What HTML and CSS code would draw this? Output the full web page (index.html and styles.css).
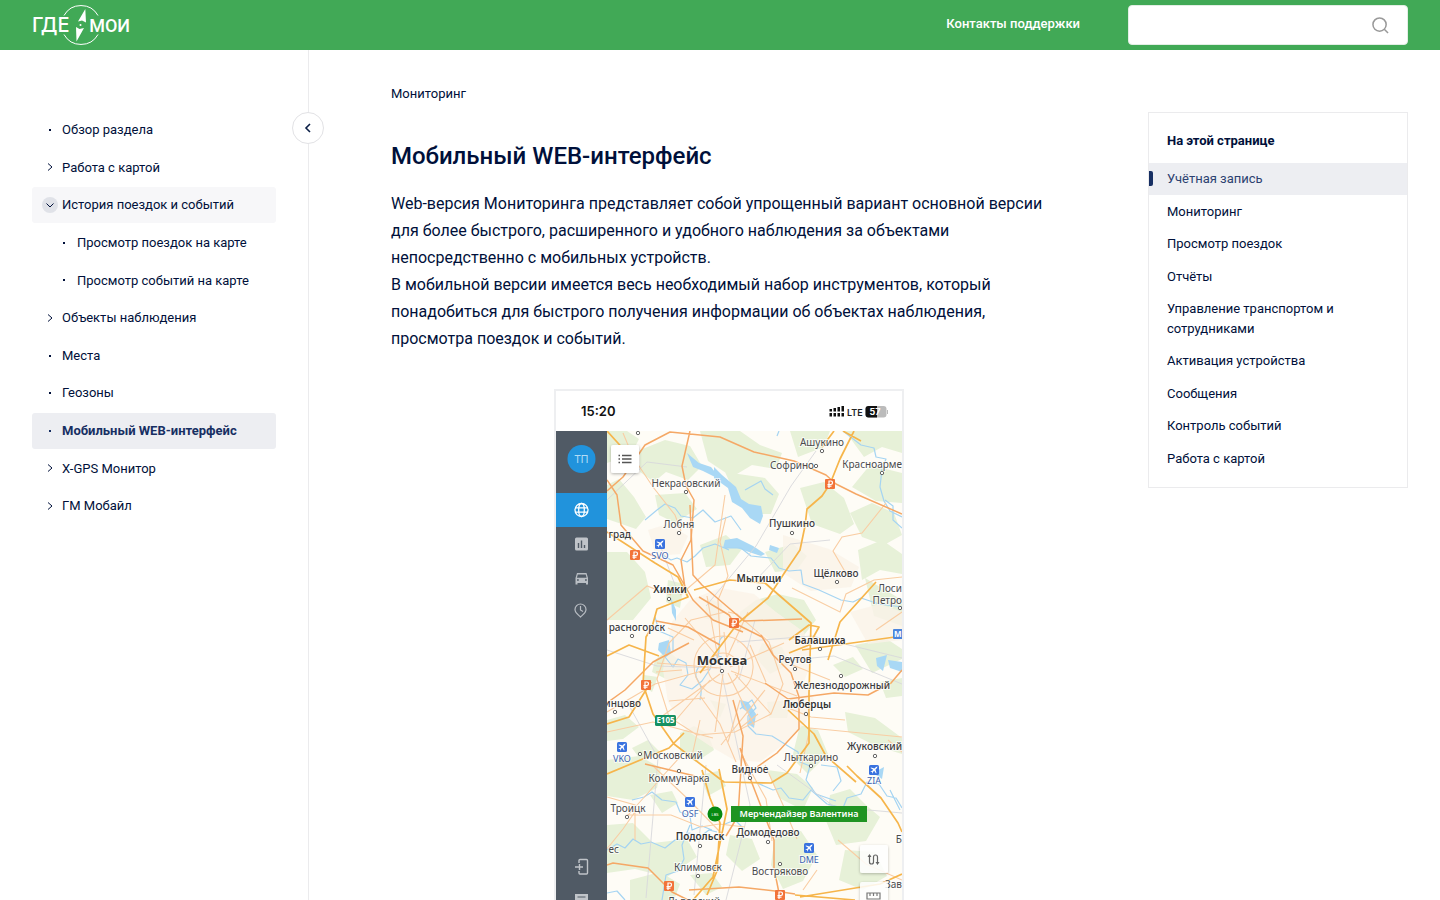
FILE: index.html
```html
<!DOCTYPE html>
<html lang="ru">
<head>
<meta charset="utf-8">
<title>Мобильный WEB-интерфейс</title>
<link rel="stylesheet" href="styles.css">
</head>
<body>
<svg class="defs" aria-hidden="true">
  <symbol id="chev" viewBox="0 0 16 16"><path d="M6 4.500 10 8l-4 3.500" fill="none" stroke="currentColor"/></symbol>
  <symbol id="chev-down" viewBox="0 0 16 16"><circle cx="8" cy="8" r="8" fill="#e0e2e8"/><path d="M4.500 6.500 8 10l3.500-3.500" fill="none" stroke="currentColor"/></symbol>
  <symbol id="dot" viewBox="0 0 16 16"><rect x="7" y="7" width="2" height="2" fill="currentColor"/></symbol>
</svg>
<div class="page">
  <header class="topbar">
    <a class="logo" href="#" aria-label="ГДЕ МОИ">
      <svg width="98" height="42" viewBox="32 4 98 42">
        <g fill="none" stroke="#fff" stroke-width="1"><path d="M64 15.500A19.500 19.500 0 0 1 98 15.500M64 34.500A19.500 19.500 0 0 0 98 34.500"/></g>
        <path d="M85.300 9 86 22.500 82 20.500 78 21.500ZM76.500 41.500 76 27 79.500 29 84 28Z" fill="#fff"/><circle cx="80.500" cy="25" r="1" fill="#fff"/>
        <text class="logo-text wide" x="32" y="32">ГДЕ</text><text class="logo-text" x="130" y="32" text-anchor="end">МОИ</text>
      </svg>
    </a>
    <a class="contacts" href="#">Контакты поддержки</a>
    <form class="search">
      <input type="text" aria-label="Поиск">
      <button type="button" aria-label="Найти"><svg width="17" height="17" viewBox="0 0 18 18" fill="none" stroke="#999" stroke-width="1.600"><circle cx="8" cy="8" r="7"/><path d="m13 13 4 4"/></svg></button>
    </form>
  </header>
  <div class="body">
    <aside class="sidebar">
      <button class="collapse" type="button" aria-label="Свернуть"><svg width="16" height="16" viewBox="0 0 16 16" fill="none" stroke="#0a1e46" stroke-width="1.600"><path d="M10 4 6 8l4 4"/></svg></button>
      <nav class="nav">
        <a href="#"><svg><use href="#dot"/></svg>Обзор раздела</a>
        <a href="#"><svg><use href="#chev"/></svg>Работа с картой</a>
        <a href="#" class="open"><svg><use href="#chev-down"/></svg>История поездок и событий</a>
        <a href="#" class="sub"><svg><use href="#dot"/></svg>Просмотр поездок на карте</a>
        <a href="#" class="sub"><svg><use href="#dot"/></svg>Просмотр событий на карте</a>
        <a href="#"><svg><use href="#chev"/></svg>Объекты наблюдения</a>
        <a href="#"><svg><use href="#dot"/></svg>Места</a>
        <a href="#"><svg><use href="#dot"/></svg>Геозоны</a>
        <a href="#" class="active"><svg><use href="#dot"/></svg>Мобильный WEB-интерфейс</a>
        <a href="#"><svg><use href="#chev"/></svg>X-GPS Монитор</a>
        <a href="#"><svg><use href="#chev"/></svg>ГМ Мобайл</a>
      </nav>
    </aside>
    <main class="content">
      <a class="crumb" href="#">Мониторинг</a>
      <h1>Мобильный WEB-интерфейс</h1>
      <p>Web-версия Мониторинга представляет собой упрощенный вариант основной версии для более быстрого, расширенного и удобного наблюдения за объектами непосредственно с мобильных устройств.<br>В мобильной версии имеется весь необходимый набор инструментов, который понадобиться для быстрого получения информации об объектах наблюдения, просмотра поездок и событий.</p>
      <svg class="phone" width="350" height="511" viewBox="554 389 350 511" role="img" aria-label="Карта мобильной версии">
        <defs>
          <clipPath id="mapclip"><rect x="607" y="431" width="295" height="469"/></clipPath>
          <g id="t"><circle r="1.700" fill="#fff" stroke="#555" stroke-width=".9"/></g>
          <g id="plane"><rect x="-5" y="-5" width="10" height="10" rx="1.500" fill="#3972df"/><path d="M3.500-3.500 2-3 .5-1.500-3-2.500-3.500-2-.8-.2-2 1-3.400.9-3.600 1.300-2 2-1.300 3.600-.9 3.400-1 2 .2.8 2 3.500 2.500 3 1.500-.5 3-2Z" fill="#fff"/></g>
          <g id="rub"><rect x="-5" y="-5" width="10" height="10" rx="1" fill="#f27339"/><path d="M-1 4V-3H1C3-3 3 .5 1 .5H-2.500M-2.500 2.200H1.500" fill="none" stroke="#fff" stroke-width="1.200"/></g>
          <filter id="sh" x="-20%" y="-20%" width="140%" height="150%"><feDropShadow dx="0" dy="1" stdDeviation="1.500" flood-opacity=".3"/></filter>
        </defs>
        <rect x="554" y="389" width="350" height="520" fill="#eeeff1"/>
        <rect x="556" y="391" width="346" height="520" fill="#fff"/>
        <g clip-path="url(#mapclip)">
          <rect x="607" y="431" width="295" height="469" fill="#fefcf6"/>
          <g fill="#e7f1d8">
            <path d="M607 431h20l12 8-8 16-24 8zM640 450l25-10 25 6 12 20-14 14-22-8-12 10-14-10zM607 485l12-6 15 18 12 20-10 12-29-10zM655 495l30-2 12 16-22 14-16-8zM700 431h40l20 14 22 8-6 16-24-4-20 12-24-16zM725 472l40 6 14 16-8 20-20 0-16-20zM790 431h40l-6 16-26 10zM845 431h57v22l-20-6-18 10zM870 465l32 8v30l-26-2-24-14zM800 488l24-6 20 16 10 26-14 10-28-10zM850 513l22-10 22 10 8 22-18 10-22-8zM858 550l24-10 20 14v20l-22-4-18 10zM765 552l28-8 14 12-10 14-22 2zM700 545l26-10 16 14-12 16-24 2zM607 552l20 0 18 20 6 26-18 22-26 0zM756 600l22-6 26 6 12 20-16 20-30 0-16-12-14 4 0-20zM668 580l16 4-4 24-14-6zM655 660l12-10 12 10 4 15-15 5-16-8zM644 675l14 2-6 15-10-6zM708 598l14 6-2 18-16-4zM762 643l20 4 8 17-20 10-14-16zM855 645l32-6 15 10v10l-30 14zM833 665l20-8 10 12-18 8zM767 702l24-2-4 18-18 0zM800 725l18 5 10 24-20 20-16-16zM845 712l30 6 27 20v16l-26-8-28-14zM865 578l37 22v26l-28-10zM607 720l18-5 14 12-16 12-16 2zM680 733l14-7 14 8 6 16-18 12-16-10zM632 748l16-8 12 12-18 10zM607 760l32-4 22 12-4 20-24 12-26-4zM650 795l22-4 6 12-16 10zM607 825l26-2 20 20 34-4 10 18-30 20-32-8-28 4zM630 880l30-8 20 12-6 16h-44zM700 775l18-4 8 15-18 10zM767 770l30 4 16 14-10 22-24-12zM830 795l20-6 16 16 14 12-14 24-30 4-10-24zM730 835l22 4 8 20-18 12-16-16zM775 835l26-4 16 24-14 26-20 8-12-24zM845 850l30 2 12 24-24 14-24-10zM690 875l22-2 10 14-16 8zM710 700l16 4-6 14zM880 682l22-4v18l-16 2z"/>
          </g>
          <path d="M672 622l18-22 30-12 34 6 22 18 28 20 8 28-8 22 10 18-8 22-22 22-24 18-26-2-24-14-24-16-18-28-5-32z" fill="#fbf2e9" opacity=".8"/>
          <path d="M783 535l46 14 30 18-8 20-40 4-28-18zM850 612l30-8 22 8v28l-34 4zM648 530l20-6 20 12-8 18-24 2z" fill="#faf2e8" opacity=".8"/>
          <g fill="#a9d8f5">
            <path d="M687 453l12 10 12 4 8 10-2 1-14-7-10-4zM714 467l8 8 14 12 5 12 8 5 12 2 2 10-3 8-10-6-8-10-10-6-4-14-14-10zM725 540l12-2 16 8 12 8-4 2-24-8-14 0zM770 545l9 3-2 5-8-3zM671 598l5 12 0 11-4-8zM659 643l10-3 2 13-8 2-5-5zM876 658l11-3-4 16-6-5zM888 660l14 2v10l-12-4zM873 773l11-6-2 12zM740 700l8 2 8 12-2 14-6-4 2-10-8-6z"/>
          </g>
          <g fill="none" stroke="#a5d4f2" stroke-width="1.200" stroke-linejoin="round">
            <path d="M645 520l12-10 8-6 10 4 6 8 12 2 10-8 12 12 16-6 10 14M663 555l8 5 6-2 10 4 8-6 8-8 12-4 14 6M725 548l16 0 10 8 20 2 8 10 10 3 12-1 2 14 16 6 22 10 12 2 8-4 18 6 23 3"/>
            <path d="M843 431l18 14 13 3 2 9 10 2-4 10-2 18 4 14 6 10 12 6M885 500l8 6 0 14 9 8M745 490l16-9 4 8 8 6M777 436l2-5M655 617l4 14 14 6 0 14-8 6 8 10 5-8 8 4 2 12-8 10 12 4 10-8 8-12 4-14 8 2M700 700c5-22-8-18-3-30 6-14 16-4 20-12 5-8-2-20 8-22M740 709l12-9 4 8-8 8 0 10 8 8 16 2 16 10 10 6 2 10 10 4-4 14 10 14 20 7"/>
            <path d="M821 765l16 2 4 14-8 10M755 782l18 8 8-2 8 10 14 2 8-10 16 14 16 4 4-10 14-4 6-12 12 2 8 12 9 2 6 10M607 850l10-6 8 4 8-9 8 5 10-2 14 6 10-8 8-1 6-6 12 3 8-6 8 2M632 800l12-3 8-5 10 8 14 2 4 10 10 4 2 14 10-4 10 4M607 893l10-2 8 9M690 825l-8 20 2 14-6 12-12 4-4 25M725 824l10-4 8 8M890 790l10 20"/>
          </g>
          <g fill="none" stroke="#d8d8db" stroke-width=".9">
            <path d="M816 451l-25 35-35 60-50 60M737 642l75-6 90 22M720 665l30 140-24 95M607 500l40-38 40 5M660 545l18 48M626 700l32 58-12 140M790 660l44-4 68 28M755 620l-16 60M830 540l-40 4-34 36M706 765l-12 130M777 765l58 42 67 6M607 650l50 16 60 2"/>
          </g>
          <g fill="none" stroke="#f9cda3" stroke-width="1.100">
            <path d="M623 433l10 24 20 30 22 28 6 16M607 620l40-34 24 9M680 595l35-30 10-70M607 712l48-28 54-15M607 732l46 -10 60 16M725 612l-34 8-22 23-12 36 12 38 28 18 38-3 36-18 12-30-14-42-32-28-9-2M694 665c0-17 14-29 29-29s31 14 30 32-14 28-30 28-29-12-29-31M708 668c0-8 6-15 15-15s16 8 16 16-6 15-15 15-16-7-16-16"/>
            <path d="M719 664l-12-68M724 664l24-52M720 668l-63-5M720 674l-59 43M723 674l-8 58M728 673l26 52M730 667l54-24M731 671l66 25M727 662l-3-30M710 680l-40 47M720 660l-35-42M735 674l36 40M700 696l20 28 16 38M740 700l-12 42M750 645l16 37M694 640l-26-12M682 670l-26 2M669 701l36-3M700 720l-8 36M765 690l-44 55"/>
            <path d="M792 588l48 24 6-18 28-14 28-3M847 575l-14-24 9-14 20-4 24-30M876 630l26-18M830 680l-40-16M740 728l18-14M742 755l24 44 6 42M765 765l18 40 14 34M627 815l44 0 30 12 18-3 26 3M628 815l20-22 12-14 20-22M652 765l38 36 34 35M607 849l16-20 14-20M845 720l-34-3-28-11M800 773l10-45 92 9M888 740l14 12M838 840l28 24 36 16M607 797l28 8 0 35M817 870l-14 20M720 640l-2-40 10-24-8-34 6-25"/>
          </g>
          <g fill="none" stroke="#f5a866" stroke-width="1.500" stroke-linejoin="round">
            <path d="M690 431l-8 35 4 20 8 14-3 40-10 20 4 28M607 491l16-14 22-32 25-13 50 5 34 15 40 9 32 14 10 9 20 10 46 20M607 480l10 15 4 30 22 26 30 14 20 35 20 20 30 12"/>
            <path d="M761 635l12 20 18 18 8 24 0 32-22 24-20 14M699 597l30 18 5 8 28 14M607 703l18-13 28-28 36-19M690 505l3 70 9 10 42 36 58-2M645 764l50 12M733 700l10 36-5 80-12 20M740 748l10 30 24 62 0 28 6 30-6 4M607 865l6-2 35 5 24 24 16 8M720 645l-32-18-32-6M765 683l23 16 46-6 34 2 23-12 11-13M795 894l-20-3-36-4-50 3"/>
          </g>
          <g fill="none" stroke="#f6b54b" stroke-width="1.700" stroke-linejoin="round">
            <path d="M854 431l-14 28-10 25-8 12-15 13-2 17-5 24-15 22-17 26-30 25-38 50M607 532l48 31 23 14 10 20-31 12-5 18-6 10-3 47 10 30 21 30 50 38 47 1 16-10 22-30 0-50 2-70-8-7-38-33-35-3-36 10M789 640l20-15 10 2-10 18-20 8M788 710l26 24 12 22 30 26M847 766l10 10 24 22 17 25 4 9M607 656l22-11 30 11M607 724l22-7 22-35M607 774l62-26 15-15M843 431l18 10M834 431l-12 16M702 770l8 28 10 25-3 48-10 24M719 769l8 40-14 68-20 23M607 431l20 22M802 650l100-14M876 582l-36 40-12 38M800 897l80-13 22-10M795 895l60 5"/>
          </g>
          <g class="map-labels">
            <text x="822" y="446">Ашукино</text><text x="792" y="469">Софрино</text><text x="902" y="468" text-anchor="end">Красноарме</text>
            <text x="686" y="487">Некрасовский</text><text x="679" y="528">Лобня</text><text x="792" y="527" class="m">Пушкино</text>
            <text x="631" y="538" text-anchor="end" class="m">град</text><text x="836" y="577" class="m">Щёлково</text><text x="759" y="582" class="b">Мытищи</text><text x="670" y="593" class="b">Химки</text>
            <text x="902" y="592" text-anchor="end">Лоси</text><text x="902" y="604" text-anchor="end">Петро</text><text x="665" y="631" text-anchor="end" class="m">расногорск</text>
            <text x="820" y="644" class="b">Балашиха</text><text x="795" y="663" class="m">Реутов</text><text x="722" y="665" class="city">Москва</text><text x="842" y="689" class="m">Железнодорожный</text>
            <text x="807" y="708" class="b">Люберцы</text><text x="641" y="707" text-anchor="end" class="m">инцово</text><text x="902" y="750" text-anchor="end" class="m">Жуковский</text>
            <text x="673" y="759">Московский</text><text x="811" y="761">Лыткарино</text><text x="750" y="773" class="m">Видное</text><text x="679" y="782">Коммунарка</text>
            <text x="628" y="812">Троицк</text><text x="700" y="840" class="b">Подольск</text><text x="768" y="836" class="m">Домодедово</text><text x="619" y="853" text-anchor="end">ес</text>
            <text x="698" y="871">Климовск</text><text x="780" y="875">Востряково</text><text x="902" y="843" text-anchor="end">Б</text><text x="902" y="888" text-anchor="end">Зав</text><text x="694" y="905">Львовский</text>
            <g class="air"><text x="660" y="559">SVO</text><text x="622" y="762">VKO</text><text x="690" y="817">OSF</text><text x="874" y="784">ZIA</text><text x="809" y="863">DME</text></g>
          </g>
          <use href="#t" x="638" y="433"/><use href="#t" x="686" y="492"/><use href="#t" x="822" y="451"/><use href="#t" x="816" y="466"/><use href="#t" x="882" y="473"/><use href="#t" x="679" y="533"/><use href="#t" x="792" y="533"/><use href="#t" x="837" y="582"/><use href="#t" x="759" y="588"/><use href="#t" x="669" y="599"/><use href="#t" x="900" y="608"/><use href="#t" x="632" y="636"/><use href="#t" x="820" y="649"/><use href="#t" x="795" y="669"/><use href="#t" x="722" y="671"/><use href="#t" x="841" y="676"/><use href="#t" x="806" y="714"/><use href="#t" x="615" y="712"/><use href="#t" x="875" y="756"/><use href="#t" x="640" y="754"/><use href="#t" x="811" y="766"/><use href="#t" x="750" y="778"/><use href="#t" x="679" y="771"/><use href="#t" x="627" y="817"/><use href="#t" x="700" y="846"/><use href="#t" x="768" y="842"/><use href="#t" x="698" y="876"/><use href="#t" x="780" y="864"/>
          <use href="#plane" x="660" y="544"/><use href="#plane" x="622" y="747"/><use href="#plane" x="690" y="802"/><use href="#plane" x="874" y="770"/><use href="#plane" x="809" y="848"/>
          <use href="#rub" x="830" y="484"/><use href="#rub" x="635" y="555"/><use href="#rub" x="734" y="623"/><use href="#rub" x="646" y="685"/><use href="#rub" x="669" y="886"/><use href="#rub" x="780" y="895"/>
          <rect x="893" y="629" width="10" height="10" rx="1" fill="#4b85dc"/><text x="894" y="637" class="tag">M</text>
          <rect x="655" y="715" width="21" height="11" rx="1.500" fill="#159062"/><text x="665.500" y="723" class="tag" text-anchor="middle">E105</text>
          <g filter="url(#sh)"><rect x="611" y="445" width="28" height="28" rx="2" fill="#fff"/></g>
          <path d="M622 455.500h9.500M622 459h9.500M622 462.500h9.500M618.500 455.500h1.500M618.500 459h1.500M618.500 462.500h1.500" stroke="#555" stroke-width="1.300"/>
          <rect x="731" y="806" width="136" height="16" fill="#1f9422"/><text x="799" y="817" class="driver">Мерчендайзер Валентина</text>
          <circle cx="715" cy="814" r="7.500" fill="#078a10"/><text x="715" y="816" class="lbs">LBS</text>
          <g filter="url(#sh)" opacity=".85"><rect x="860" y="845" width="28" height="28" rx="2" fill="#fff"/><rect x="860" y="882" width="28" height="28" rx="2" fill="#fff"/></g>
          <path d="M869.500 855v7a2 2 0 0 0 4 0v-5a2 2 0 0 1 4 0v6" fill="none" stroke="#666" stroke-width="1.200"/><path d="m867.500 857 2-3 2 3zM875.500 862l2 3 2-3z" fill="#666"/>
          <path d="M867 893h13v6h-13zM870 893v3M873.500 893v3M877 893v3" fill="none" stroke="#777" stroke-width="1.200"/>
        </g>
        <rect x="556" y="431" width="51" height="480" fill="#505a65"/>
        <circle cx="581.500" cy="459" r="14" fill="#2193dc"/><text x="581.500" y="463" class="avatar">ТП</text>
        <rect x="556" y="493" width="51" height="34" fill="#2193dc"/>
        <g fill="none" stroke="#fff" stroke-width="1.300"><circle cx="581.500" cy="510" r="6.500"/><ellipse cx="581.500" cy="510" rx="2.800" ry="6.500"/><path d="M575.500 507.800h12M575.500 512.200h12"/></g>
        <rect x="575" y="537.500" width="13" height="13" rx="1.500" fill="#c0c4c9"/><path d="M578.500 543v5M581.500 540.500v7.500M584.500 545v3" stroke="#505a65" stroke-width="1.400"/>
        <path d="M577 573h9.500l1.500 5v6.500h-2V583h-8.500v1.500h-2V578zM577.800 574.500l-.9 3.200h9.700l-.9-3.200zM577 579.200v1.600h1.800v-1.600zM585 579.200v1.600h1.800v-1.600z" fill="#b9bec4" fill-rule="evenodd"/>
        <g fill="none" stroke="#b9bec4" stroke-width="1.200"><path d="M580.500 617c-2-2-5.500-4-5.500-7.500a5.500 5.500 0 0 1 11 0c0 3.500-3.500 5.500-5.500 7.500zM580.500 606v4l2.500 1.500"/></g>
        <path d="M579 863v-2.500q0-1 1-1h6.500q1 0 1 1v12.500q0 1-1 1H580q-1 0-1-1V871M575 867h8M579.500 864v6" fill="none" stroke="#c0c4c9" stroke-width="1.400"/>
        <path d="M575 894h13v7h-13z" fill="#c0c4c9"/><path d="M577.500 897h8" stroke="#505a65"/>
        <text x="581" y="416" class="clock">15:20</text>
        <path d="M829.500 413v3.500h2.500V413zM833.500 413v3.500h2.500V413zM837.500 413v3.500h2.500V413zM841.500 413v3.500h2.500V413zM829.500 409v2.500h2.500V409zM833.500 408v3.500h2.500V408zM837.500 407v4.500h2.500V407zM841.500 406v5.500h2.500V406z" fill="#111"/>
        <text x="847" y="416" class="lte">LTE</text>
        <rect x="865.500" y="406" width="21" height="11.500" rx="3" fill="#bbb"/><path d="M868.500 406H877v11.500h-8.500a3 3 0 0 1-3-3V409a3 3 0 0 1 3-3z" fill="#111"/><rect x="887" y="410" width="1" height="4" fill="#bbb"/><text x="875" y="415" class="batt">57</text>
      </svg>
    </main>
    <aside class="toc-col">
      <nav class="toc" aria-labelledby="toc-title">
        <h2 id="toc-title">На этой странице</h2>
        <a href="#" class="current">Учётная запись</a>
        <a href="#">Мониторинг</a>
        <a href="#">Просмотр поездок</a>
        <a href="#">Отчёты</a>
        <a href="#">Управление транспортом и сотрудниками</a>
        <a href="#">Активация устройства</a>
        <a href="#">Сообщения</a>
        <a href="#">Контроль событий</a>
        <a href="#">Работа с картой</a>
      </nav>
    </aside>
  </div>
</div>
</body>
</html>
```
FILE: styles.css
```css
* { box-sizing: border-box; }
body { margin: 0; font-family: Roboto, "Liberation Sans", sans-serif; font-size: 13px; line-height: 1.5; color: #00103a; background: #fff; }
a { color: inherit; text-decoration: none; }
button { cursor: pointer; padding: 0; }
.defs { position: absolute; width: 0; height: 0; }
.page { display: flex; flex-direction: column; height: 100vh; overflow: hidden; }

.topbar { display: flex; align-items: center; flex: none; height: 50px; padding: 0 32px; background: #41a956; }
.logo { display: flex; margin-right: auto; }
.logo-text { font: 500 18px Roboto, sans-serif; fill: #fff; }
.logo-text.wide { font: 500 20px Inter, sans-serif; }
.contacts { margin-right: 48px; padding-bottom: 3px; color: #fff; font-weight: 500; }
.search { display: flex; align-items: center; width: 280px; height: 40px; padding-right: 18px; background: #fff; border: 1px solid #e3eee5; border-radius: 4px; }
.search input { flex: 1; min-width: 0; height: 36px; padding: 0 16px; border: 0; outline: 0; background: none; font: inherit; }
.search button { display: flex; border: 0; background: none; }

.body { display: flex; flex: 1; min-height: 0; }
.sidebar { position: relative; flex: none; width: 309px; padding: 62px 32px 0; border-right: 1px solid #ebebed; }
.collapse { position: absolute; top: 62px; right: -16px; display: flex; align-items: center; justify-content: center; width: 32px; height: 32px; border: 1px solid #e2e2e5; border-radius: 50%; background: #fff; }
.nav { display: flex; flex-direction: column; gap: 2px; line-height: 1.51; }
.nav a { display: flex; align-items: center; gap: 4px; padding: 8px 10px; border-radius: 3px; }
.nav svg { flex: none; width: 16px; height: 16px; }
.nav .sub { padding-left: 24px; gap: 5px; }
.nav .open { background: #f7f7f9; }
.nav .active { background: #edeef2; color: #172f63; font-weight: 700; }

.content { flex: 1; min-width: 0; padding: 34px 82px 0; overflow-y: auto; scrollbar-width: none; }
.crumb { display: block; }
h1 { margin: 34px 0 0; font-size: 24px; line-height: 36px; font-weight: 500; }
p { margin: 16px 0 37px; font-size: 16px; line-height: 27px; }
.phone { display: block; margin: 0 auto; max-width: 100%; }
.phone text { font-family: "Noto Sans", sans-serif; }
.map-labels { font-size: 10px; fill: #4b4b4d; text-anchor: middle; paint-order: stroke; stroke: #fff; stroke-width: 2px; stroke-opacity: .7; }
.map-labels .m { font-weight: 500; fill: #3c3c3e; }
.map-labels .b { font-weight: 600; fill: #333; }
.map-labels .city { font-size: 13px; font-weight: 700; fill: #333; }
.air { font-size: 9px; fill: #3a62b0; }
.tag { font-size: 8px; font-weight: 700; fill: #fff; }
.driver { font-size: 9px; font-weight: 600; fill: #fff; text-anchor: middle; }
.lbs { font-size: 4px; fill: #fff; text-anchor: middle; }
.avatar { font-size: 11px; fill: #b3dcf6; text-anchor: middle; }
.phone .clock { font: 600 13px Inter, sans-serif; fill: #111; }
.phone .lte { font: 600 9px Inter, sans-serif; fill: #222; }
.phone .batt { font: 700 9px Inter, sans-serif; fill: #fff; text-anchor: middle; }

.toc-col { flex: none; width: 292px; padding: 62px 32px 0 0; }
.toc { display: flex; flex-direction: column; gap: 1px; padding: 18px 0 13px; border: 1px solid #ebebed; }
.toc h2 { margin: 0 0 11px; padding: 0 18px; font-size: 13px; line-height: 20px; font-weight: 700; }
.toc a { position: relative; padding: 6px 18px; }
.toc .current { background: #edeef2; color: #2c4170; }
.toc .current::before { content: ""; position: absolute; left: 0; top: 8px; width: 4px; height: 15px; border-radius: 0 2px 2px 0; background: #172f63; }
```
